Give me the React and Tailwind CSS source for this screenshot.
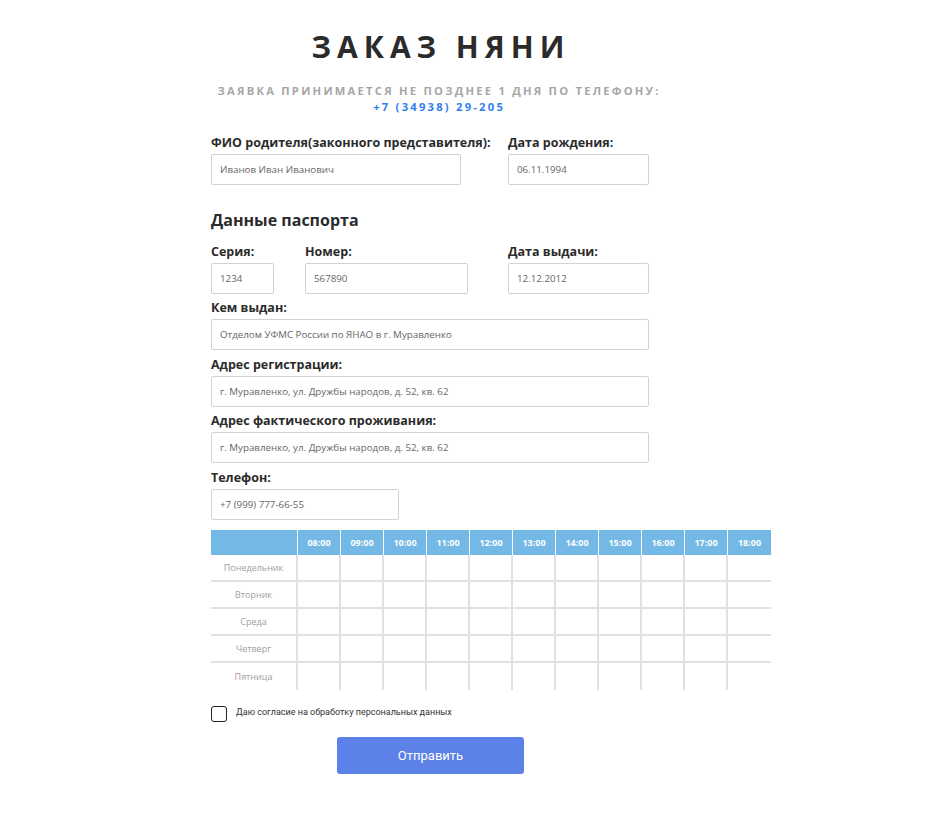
import React, { useState } from "react";

const times = ["08:00", "09:00", "10:00", "11:00", "12:00", "13:00", "14:00", "15:00", "16:00", "17:00", "18:00"];
const days = ["Понедельник", "Вторник", "Среда", "Четверг", "Пятница"];

const Field = ({ label, value, className = "" }) => (
  <div className={"flex flex-col " + className}>
    <p className="whitespace-nowrap text-[12.5px] font-bold leading-[18px] text-[#2b2b2b]">{label}</p>
    <input
      defaultValue={value}
      className="mt-[2px] h-[31px] w-full rounded-[2px] border border-[#cfd2d6] px-[8px] text-[9.75px] text-[#666] outline-none"
      type="text"
    />
  </div>
);

const App = () => {
  const [agree, setAgree] = useState(false);

  return (
    <div className="min-h-[817px] bg-white font-['Open_Sans',sans-serif] text-[#2b2b2b]">
      <div className="ml-[211px] w-[454px] pt-[29px]">
        <h1 className="pl-[0.2em] text-center text-[30px] font-bold leading-[36px] tracking-[0.2em] text-[#2b2b2b]">
          ЗАКАЗ НЯНИ
        </h1>
        <p className="mt-[18px] whitespace-nowrap pl-[0.2em] text-center text-[11.2px] font-bold leading-[16px] tracking-[0.2em] text-[#a6a6a6]">
          ЗАЯВКА ПРИНИМАЕТСЯ НЕ ПОЗДНЕЕ 1 ДНЯ ПО ТЕЛЕФОНУ:
        </p>
        <p className="pl-[0.2em] text-center text-[11.2px] font-bold leading-[16px] tracking-[0.2em] text-[#2f80ed]">
          +7 (34938) 29-205
        </p>

        <div className="mt-[19px] flex gap-[47px]">
          <Field className="w-[250px]" label="ФИО родителя(законного представителя):" value="Иванов Иван Иванович" />
          <Field className="w-[141px]" label="Дата рождения:" value="06.11.1994" />
        </div>

        <h2 className="mt-[23px] text-[16px] font-bold leading-[24px]">Данные паспорта</h2>

        <div className="mt-[11px] flex">
          <Field className="w-[63px]" label="Серия:" value="1234" />
          <Field className="ml-[31px] w-[163px]" label="Номер:" value="567890" />
          <Field className="ml-[40px] w-[141px]" label="Дата выдачи:" value="12.12.2012" />
        </div>

        <Field className="mt-[5px] w-[438px]" label="Кем выдан:" value="Отделом УФМС России по ЯНАО в г. Муравленко" />
        <Field className="mt-[6px] w-[438px]" label="Адрес регистрации:" value="г. Муравленко, ул. Дружбы народов, д. 52, кв. 62" />
        <Field className="mt-[5px] w-[438px]" label="Адрес фактического проживания:" value="г. Муравленко, ул. Дружбы народов, д. 52, кв. 62" />
        <Field className="mt-[6px] w-[188px]" label="Телефон:" value="+7 (999) 777-66-55" />

        <div className="mt-[10px] w-[560px]">
          <div className="flex h-[25px] bg-[#74b9e5]">
            <div className="w-[87px] border-r border-white" />
            {times.map((t) => (
              <div
                key={t}
                className="flex w-[43px] items-center justify-center border-r border-white text-[9px] font-bold text-white last:border-r-0"
              >
                {t}
              </div>
            ))}
          </div>
          {days.map((d, i) => (
            <div key={d} className={"flex h-[27px] " + (i < days.length - 1 ? "border-b-2 border-[#dfe1e5]" : "")}>
              <div className="flex w-[87px] items-center justify-center border-r-2 border-[#dfe1e5] text-[9px] text-[#a39e9b]">
                {d}
              </div>
              {times.map((t) => (
                <div key={t} className="w-[43px] border-r-2 border-[#dfe1e5] last:border-r-0" />
              ))}
            </div>
          ))}
        </div>

        <label className="mt-[16px] flex items-start gap-[9px]">
          <input
            type="checkbox"
            checked={agree}
            onChange={(e) => setAgree(e.target.checked)}
            className="h-[16px] w-[16px] appearance-none rounded-[3px] border-[1.5px] border-[#222] bg-white checked:bg-[#222]"
          />
          <span className="font-['Roboto',sans-serif] text-[9px] leading-[12px] text-[#333]">
            Даю согласие на обработку персональных данных
          </span>
        </label>

        <button className="ml-[126px] mt-[15px] h-[37px] w-[187px] rounded-[3px] bg-[#5c82e9] font-['Roboto',sans-serif] text-[13px] text-white">
          Отправить
        </button>
      </div>
    </div>
  );
};

export default App;
